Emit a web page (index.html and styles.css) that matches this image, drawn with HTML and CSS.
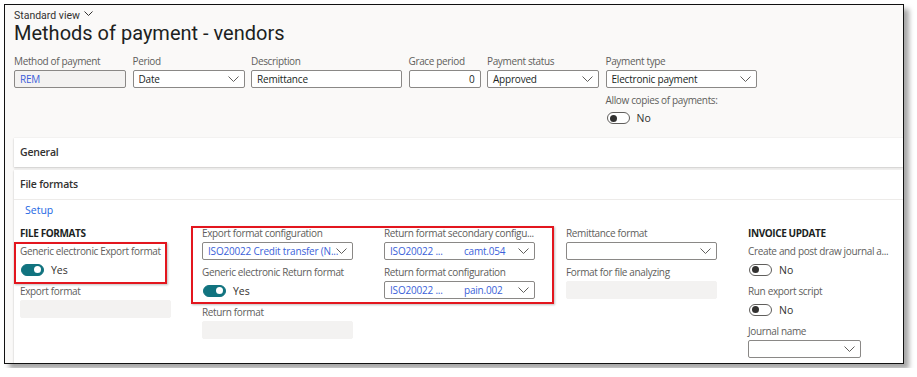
FILE: index.html
```html
<!DOCTYPE html>
<html lang="en">
<head>
	<meta charset="UTF-8">
	<title>Methods of payment - vendors</title>
	<link rel="stylesheet" href="styles.css">
</head>
<body>
	<div class="frame">
		<div class="view">Standard view <svg class="chev-sm" width="9" height="6" viewBox="0 0 9 6"><polyline points="0.5,0.5 4.5,4.5 8.5,0.5" /></svg></div>
		<h1 class="title">Methods of payment - vendors</h1>

		<div class="top-fields">
			<div class="field">
				<div class="lbl">Method of payment</div>
				<div class="input locked val-blue">REM</div>
			</div>
			<div class="field">
				<div class="lbl">Period</div>
				<div class="input select">Date<svg class="chev" width="11" height="6" viewBox="0 0 11 6"><polyline points="0.5,0.5 5.5,5.5 10.5,0.5" /></svg></div>
			</div>
			<div class="field">
				<div class="lbl">Description</div>
				<div class="input">Remittance</div>
			</div>
			<div class="field">
				<div class="lbl">Grace period</div>
				<div class="input num">0</div>
			</div>
			<div class="field">
				<div class="lbl">Payment status</div>
				<div class="input select">Approved<svg class="chev" width="11" height="6" viewBox="0 0 11 6"><polyline points="0.5,0.5 5.5,5.5 10.5,0.5" /></svg></div>
			</div>
			<div class="field">
				<div class="lbl">Payment type</div>
				<div class="input select">Electronic payment<svg class="chev" width="11" height="6" viewBox="0 0 11 6"><polyline points="0.5,0.5 5.5,5.5 10.5,0.5" /></svg></div>
				<div class="lbl lbl-gap">Allow copies of payments:</div>
				<div class="toggle-row"><span class="toggle"></span>No</div>
			</div>
		</div>

		<div class="card card-closed">General</div>

		<div class="card card-open">
			<div class="card-head">File formats</div>
			<div class="card-body">
				<div class="link">Setup</div>
				<div class="cols">
					<div class="col">
						<div class="group-head">FILE FORMATS</div>
						<div class="field">
							<div class="lbl">Generic electronic Export format</div>
							<div class="toggle-row"><span class="toggle on"></span>Yes</div>
						</div>
						<div class="field">
							<div class="lbl">Export format</div>
							<div class="input empty"></div>
						</div>
					</div>
					<div class="col">
						<div class="field">
							<div class="lbl">Export format configuration</div>
							<div class="input select val-blue">ISO20022 Credit transfer (N...<svg class="chev" width="11" height="6" viewBox="0 0 11 6"><polyline points="0.5,0.5 5.5,5.5 10.5,0.5" /></svg></div>
						</div>
						<div class="field">
							<div class="lbl">Generic electronic Return format</div>
							<div class="toggle-row"><span class="toggle on"></span>Yes</div>
						</div>
						<div class="field">
							<div class="lbl">Return format</div>
							<div class="input empty"></div>
						</div>
					</div>
					<div class="col">
						<div class="field">
							<div class="lbl">Return format secondary configu...</div>
							<div class="input select val-blue"><span class="split">ISO20022 ...</span>camt.054<svg class="chev" width="11" height="6" viewBox="0 0 11 6"><polyline points="0.5,0.5 5.5,5.5 10.5,0.5" /></svg></div>
						</div>
						<div class="field">
							<div class="lbl">Return format configuration</div>
							<div class="input select val-blue"><span class="split">ISO20022 ...</span>pain.002<svg class="chev" width="11" height="6" viewBox="0 0 11 6"><polyline points="0.5,0.5 5.5,5.5 10.5,0.5" /></svg></div>
						</div>
					</div>
					<div class="col">
						<div class="field">
							<div class="lbl">Remittance format</div>
							<div class="input select"><svg class="chev" width="11" height="6" viewBox="0 0 11 6"><polyline points="0.5,0.5 5.5,5.5 10.5,0.5" /></svg></div>
						</div>
						<div class="field">
							<div class="lbl">Format for file analyzing</div>
							<div class="input empty"></div>
						</div>
					</div>
					<div class="col">
						<div class="group-head">INVOICE UPDATE</div>
						<div class="field">
							<div class="lbl">Create and post draw journal a...</div>
							<div class="toggle-row"><span class="toggle"></span>No</div>
						</div>
						<div class="field">
							<div class="lbl">Run export script</div>
							<div class="toggle-row"><span class="toggle"></span>No</div>
						</div>
						<div class="field">
							<div class="lbl">Journal name</div>
							<div class="input select short"><svg class="chev" width="11" height="6" viewBox="0 0 11 6"><polyline points="0.5,0.5 5.5,5.5 10.5,0.5" /></svg></div>
						</div>
					</div>
				</div>
			</div>
			<!-- red annotation boxes drawn over the form -->
			<div class="mark mark-export"></div>
			<div class="mark mark-return"></div>
		</div>
	</div>
</body>
</html>
```

FILE: styles.css
```css
body{
	margin: 0;
	padding: 4px;
	background: #fff;
	font-family: "Open Sans", "Noto Sans", sans-serif;
	color: #323130;
}

.frame{
	width: 889px;
	height: 354px;
	border: 1px solid #111;
	background: #faf9f8;
	box-shadow: 5px 5px 5px rgba(0,0,0,0.35);
	overflow: hidden;
	padding: 4px 0 0 9px;
	box-sizing: content-box;
}

.view{
	font-family: Roboto, "Open Sans", sans-serif;
	font-size: 10.5px;
	line-height: 13px;
	color: #323130;
}
.chev-sm{
	fill: none;
	stroke: #323130;
	stroke-width: 1;
	margin-left: 1px;
	vertical-align: 2px;
}

.title{
	margin: 0;
	font-family: Roboto, "Open Sans", sans-serif;
	font-size: 20px;
	font-weight: 400;
	line-height: 23px;
	color: #201f1e;
}

.top-fields{
	display: grid;
	grid-template-columns: 112px 112px 151px 72px 112px 151px;
	column-gap: 6.5px;
	margin-top: 8.5px;
}

.field{
	margin-bottom: 5px;
}

.lbl{
	font-size: 10px;
	line-height: 15px;
	color: #605e5c;
	margin-bottom: 1px;
	white-space: nowrap;
	letter-spacing: -0.35px;
}
.lbl-gap{
	margin-top: 5px;
}

.input{
	height: 18px;
	box-sizing: border-box;
	border: 1px solid #8a8886;
	border-radius: 2px;
	background: #fff;
	font-size: 10px;
	line-height: 16px;
	padding: 0 5px;
	color: #201f1e;
	display: flex;
	align-items: center;
	white-space: nowrap;
	overflow: hidden;
	letter-spacing: -0.2px;
}
.input.locked{
	background: #f3f2f1;
}
.input.empty{
	background: #f3f2f1;
	border-color: #f3f2f1;
}
.input.num{
	justify-content: flex-end;
}
.input.select{
	position: relative;
	padding-right: 18px;
}
.input.short{
	width: 113px;
}
.val-blue{
	color: #3b5fd9 !important;
}
.split{
	display: inline-block;
	width: 74px;
}

.chev{
	position: absolute;
	right: 5px;
	top: 5px;
	fill: none;
	stroke: #605e5c;
	stroke-width: 1;
}

.toggle-row{
	height: 19px;
	display: flex;
	align-items: center;
	gap: 7px;
	font-size: 10.5px;
	color: #323130;
	padding-left: 1px;
}
.toggle{
	width: 23px;
	height: 12px;
	box-sizing: border-box;
	border: 1px solid #605e5c;
	border-radius: 6px;
	background: #fff;
	position: relative;
}
.toggle::after{
	content: "";
	position: absolute;
	left: 2px;
	top: 1.5px;
	width: 7px;
	height: 7px;
	border-radius: 50%;
	background: #323130;
}
.toggle.on{
	background: #11737f;
	border-color: #11737f;
}
.toggle.on::after{
	left: auto;
	right: 2px;
	background: #fff;
}

.card{
	background: #fff;
	box-shadow: 0 1px 2px rgba(0,0,0,0.18), 0 0 1px rgba(0,0,0,0.1);
}
.card-closed{
	margin-top: 5px;
	height: 29px;
	line-height: 29px;
	font-size: 10.5px;
	font-weight: 600;
	padding-left: 6px;
	letter-spacing: -0.2px;
}
.card-open{
	margin-top: 3px;
	height: 222px;
	position: relative;
}
.card-head{
	height: 29px;
	line-height: 29px;
	font-size: 10.5px;
	font-weight: 600;
	padding-left: 6px;
	border-bottom: 1px solid #edebe9;
	letter-spacing: -0.2px;
}
.card-body{
	padding: 3px 0 0 6px;
}
.link{
	font-size: 10.5px;
	line-height: 15px;
	color: #2266e3;
	padding-left: 5px;
	margin-bottom: 8.5px;
}
.cols{
	display: grid;
	grid-template-columns: repeat(5, 151px);
	column-gap: 31px;
}
.group-head{
	font-size: 10px;
	font-weight: 700;
	line-height: 15px;
	margin-bottom: 3px;
	color: #201f1e;
	letter-spacing: -0.4px;
}

.mark{
	position: absolute;
	border: 2px solid #e3161e;
	box-shadow: 1px 1px 2px rgba(0,0,0,0.25);
	box-sizing: border-box;
}
.mark-export{
	left: 0;
	top: 72px;
	width: 153px;
	height: 42px;
}
.mark-return{
	left: 177px;
	top: 56px;
	width: 363px;
	height: 78px;
}
```
